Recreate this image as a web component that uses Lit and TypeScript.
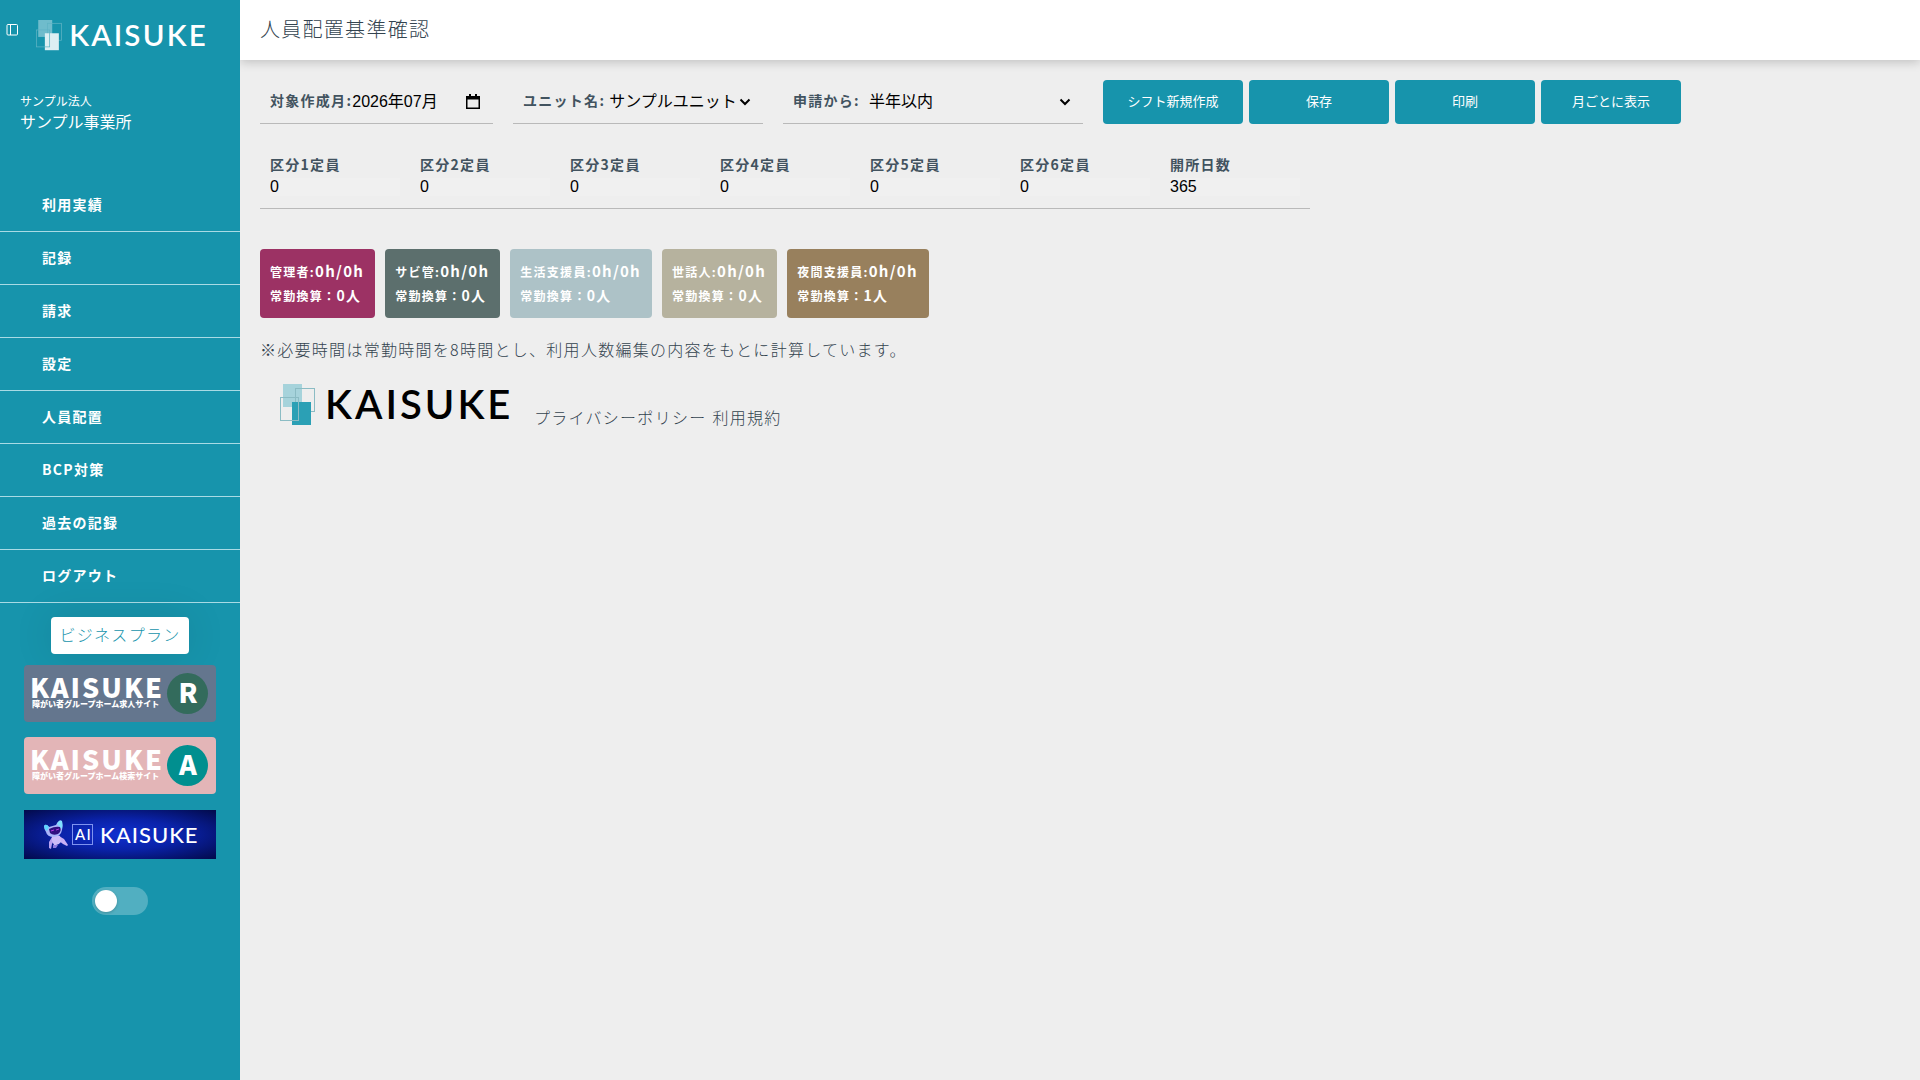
import { LitElement, html, css, svg } from "lit";
import { customElement, property } from "lit/decorators.js";

@customElement("kaisuke-logo")
export class KaisukeLogo extends LitElement {
  static styles = css`
    :host {
      display: block;
      color: #000;
      --square-a: #a6d3db;
      --square-b: #2ba0b5;
      --outline: #8bbcc4;
    }
    :host([light]) {
      color: #fff;
      --square-a: #6fbccc;
      --square-b: #dceff3;
      --outline: #5fb3c4;
    }
    svg {
      display: block;
      width: 100%;
      overflow: visible;
    }
    .word {
      font: 600 40px Lato, "Liberation Sans", sans-serif;
      letter-spacing: 3px;
      fill: currentColor;
    }
    .a {
      fill: var(--square-a);
    }
    .b {
      fill: var(--square-b);
    }
    .line {
      fill: none;
      stroke: var(--outline);
    }
  `;
  render() {
    return html`<svg viewBox="0 0 228 41" role="img" aria-label="KAISUKE">
      <rect class="a" x="3" y="0" width="19" height="23" />
      <rect class="line" x="15.5" y="4.500" width="19" height="23" />
      <rect class="b" x="12" y="18" width="19" height="23" />
      <rect class="line" x="0.500" y="13.500" width="18" height="23" />
      <text class="word" x="45" y="35">KAISUKE</text>
    </svg>`;
  }
}

@customElement("promo-banner")
export class PromoBanner extends LitElement {
  @property() caption = "";
  @property() letter = "";
  @property({ reflect: true }) tone = "slate";

  static styles = css`
    :host {
      display: block;
    }
    .banner {
      display: block;
      border-radius: 4px;
      background: #64768e;
    }
    .pink {
      background: #e3b5b7;
    }
    svg {
      display: block;
      width: 100%;
      fill: #fff;
    }
    .disc {
      fill: #336b5c;
    }
    .pink .disc {
      fill: #018f8f;
    }
    .word {
      font: 900 27px "Noto Sans CJK JP", sans-serif;
      letter-spacing: 2px;
    }
    .caption {
      font: 900 8px "Noto Sans CJK JP", sans-serif;
      letter-spacing: 0;
    }
    .letter {
      font: 900 27px "Noto Sans CJK JP", sans-serif;
      letter-spacing: 0;
      text-anchor: middle;
    }
  `;
  render() {
    return html`<a class="banner ${this.tone}" href="#">
      <svg viewBox="0 0 192 57">
        <text class="word" x="6" y="33">KAISUKE</text>
        <text class="caption" x="8" y="42">${this.caption}</text>
        <circle class="disc" cx="163.500" cy="28.500" r="20.500" />
        <text class="letter" x="164" y="38">${this.letter}</text>
      </svg>
    </a>`;
  }
}

const MENU = ["利用実績", "記録", "請求", "設定", "人員配置", "BCP対策", "過去の記録", "ログアウト"];
const ACTIONS = ["シフト新規作成", "保存", "印刷", "月ごとに表示"];
const CAPACITY = [
  ["区分1定員", "0"],
  ["区分2定員", "0"],
  ["区分3定員", "0"],
  ["区分4定員", "0"],
  ["区分5定員", "0"],
  ["区分6定員", "0"],
  ["開所日数", "365"],
];
const ROLES = [
  { name: "管理者", count: "0", tone: "plum" },
  { name: "サビ管", count: "0", tone: "moss" },
  { name: "生活支援員", count: "0", tone: "sky" },
  { name: "世話人", count: "0", tone: "sand" },
  { name: "夜間支援員", count: "1", tone: "bronze" },
];

const robot = svg`
  <path d="M28 27 L25 32 L25 38 L27 39 L28 34 L31 29 Z" fill="#b9a2f0" />
  <path d="M35 26 L40 29 L44 35 L43 36 L39 34 L35 31 Z" fill="#c9b0f5" />
  <path d="M28 26 Q32 24 36 26 L37 32 Q34 36 30 35 L28 31 Z" fill="#cdbcf8" />
  <path d="M29 35 h5 l-2 3 h-3 z" fill="#8f7be0" />
  <path d="M20 16 Q22 13 25 17 L32 15 Q35 9 38 11 Q39 16 38 20 Q37 26 30 27 Q23 27 22 22 Q20 19 20 16 Z" fill="#a9b4fa" />
  <path d="M20 16 Q22 13 25 17 L23 21 Q20 19 20 16 Z" fill="#5fd4ff" />
  <path d="M33 14 Q35 9 38 11 Q39 15 38 19 L35 16 Z" fill="#7fe0ff" />
  <path d="M25 19 Q31 16 36 17 Q38 21 34 24 Q29 26 26 23 Z" fill="#2f0f80" />
  <path d="M27 21 l3 -1 M32 20 l3 -1" stroke="#b23be0" />
`;

@customElement("app-root")
export class AppRoot extends LitElement {
  static styles = css`
    :host {
      display: grid;
      grid-template-columns: 240px minmax(0, 1fr);
      min-height: 100vh;
      background: #eee;
      color: #33434f;
      font: 300 16px/24px "Noto Sans CJK JP", sans-serif;
      letter-spacing: 0.08em;
    }
    * {
      box-sizing: border-box;
    }
    a {
      color: inherit;
      text-decoration: none;
    }
    button,
    input,
    select {
      font-family: "Liberation Sans", "Noto Sans CJK JP", sans-serif;
      color: #000;
      border: 0;
      border-radius: 0;
      margin: 0;
      padding: 0;
      background: transparent;
    }

    .side {
      background: #1794ac;
      color: #fff;
    }
    .brand {
      display: flex;
      align-items: flex-start;
      gap: 18px;
      padding: 20px 36px 0 6px;
    }
    .brand kaisuke-logo {
      flex: 1;
    }
    .collapse {
      width: 12px;
      height: 12px;
      margin-top: 4px;
    }
    .collapse svg {
      display: block;
    }
    .office {
      padding: 41px 20px 0;
      letter-spacing: 0;
      font-weight: 400;
      line-height: 20px;
    }
    .office p {
      margin: 0;
    }
    .office .corp {
      font-size: 12px;
    }
    .menu {
      margin: 48px 0 0;
      padding: 0;
      list-style: none;
      font-weight: 700;
      font-size: 14px;
      line-height: 50px;
    }
    .menu li {
      border-bottom: 1px solid #a9dbe5;
    }
    .menu a {
      display: block;
      padding: 0 0 2px 42px;
    }
    .extras {
      display: flex;
      flex-direction: column;
      align-items: center;
      padding: 14px 24px;
    }
    .plan {
      padding: 5px 9px 8px;
      border-radius: 4px;
      background: #fff;
      color: #1794ac;
      box-shadow: 0 0 40px rgba(0, 0, 0, 0.1);
    }
    .extras promo-banner {
      width: 100%;
      margin: 11px 0 4px;
    }
    .ai {
      display: block;
      width: 100%;
      margin-top: 12px;
      background: radial-gradient(ellipse at center, #1030d0 0%, #0a22a8 45%, #020a4a 100%);
    }
    .ai svg {
      display: block;
      width: 100%;
    }
    .ai .word {
      font: 500 22px Lato, sans-serif;
      letter-spacing: 1px;
      fill: #fff;
    }
    .ai .mark {
      font: 500 15px Lato, sans-serif;
      fill: #fff;
    }
    .switch {
      appearance: none;
      display: flex;
      width: 56px;
      height: 28px;
      margin-top: 28px;
      padding: 3px;
      border-radius: 14px;
      background: rgba(255, 255, 255, 0.25);
    }
    .switch::before {
      content: "";
      width: 22px;
      height: 22px;
      border-radius: 50%;
      background: #fff;
      box-shadow: 0 1px 3px rgba(0, 0, 0, 0.2);
    }
    .switch:checked {
      justify-content: flex-end;
    }

    .head {
      padding: 14px 20px 16px;
      background: #fff;
      box-shadow: 0 2px 10px rgba(0, 0, 0, 0.2);
      clip-path: inset(0 0 -20px 0);
    }
    h1 {
      margin: 0;
      font-size: 20px;
      font-weight: 300;
      line-height: 30px;
    }
    .body {
      padding: 20px;
    }
    .filters {
      display: flex;
      flex-wrap: wrap;
      gap: 20px;
    }
    .field {
      display: flex;
      align-items: center;
      height: 44px;
      padding: 0 10px;
      border-bottom: 1px solid #b9b9b9;
    }
    .field input,
    .field select {
      flex: 1;
      min-width: 0;
      height: 24px;
      font-size: 16px;
    }
    .field label,
    .field input {
      padding-bottom: 3px;
    }
    label {
      color: #42535f;
      font-size: 14px;
      font-weight: 700;
      white-space: nowrap;
    }
    .month {
      width: 233px;
    }
    .unit {
      width: 250px;
    }
    .since {
      width: 300px;
    }
    .calendar {
      width: 20px;
      height: 20px;
    }
    .calendar svg {
      display: block;
      margin: 0 auto;
    }
    select {
      appearance: none;
      background: url('data:image/svg+xml,<svg xmlns="http://www.w3.org/2000/svg" width="12" height="8"><path d="M1.500 1.500 6 6l4.500-4.500" fill="none" stroke="black" stroke-width="2"/></svg>') no-repeat right 2px center;
      padding-left: 4px;
    }
    .since select {
      padding-left: 9px;
    }
    .actions {
      display: flex;
      gap: 6px;
    }
    .actions button {
      width: 140px;
      height: 44px;
      padding-bottom: 4px;
      border-radius: 4px;
      background: #1794ac;
      color: #fff;
      font-size: 13px;
    }
    .capacity {
      display: inline-flex;
      margin-top: 28px;
      padding-bottom: 12px;
      border-bottom: 1px solid #b9b9b9;
    }
    .cell {
      display: flex;
      flex-direction: column;
      width: 150px;
      padding: 0 10px;
    }
    .cell label {
      line-height: 24px;
      padding-bottom: 2px;
    }
    .cell input {
      width: 130px;
      height: 18px;
      font-size: 16px;
      background: #f0f0f0;
    }
    .chips {
      display: flex;
      flex-wrap: wrap;
      gap: 10px;
      margin-top: 40px;
      color: #fff;
      font-size: 12px;
      font-weight: 700;
    }
    .chip {
      padding: 10px 11px 11px 10px;
      border-radius: 4px;
    }
    .chip div {
      height: 24px;
    }
    .hours {
      font-size: 15px;
    }
    .people {
      font-size: 14px;
    }
    .plum {
      background: #9c3264;
    }
    .moss {
      background: #5c6f6d;
    }
    .sky {
      background: #adc2c7;
    }
    .sand {
      background: #b6b29e;
    }
    .bronze {
      background: #98805d;
    }
    .note {
      margin: 19px 0 0;
    }
    .foot {
      display: flex;
      align-items: flex-start;
      gap: 6px;
      padding: 23px 20px 0;
    }
    .foot kaisuke-logo {
      width: 228px;
      margin-right: 20px;
    }
    .foot a {
      padding-top: 21px;
    }
  `;

  render() {
    return html`
      <aside class="side">
        <div class="brand">
          <button class="collapse" aria-label="メニュー">
            <svg width="12" height="12" viewBox="0 0 12 12" fill="none" stroke="#fff">
              <rect x="1" y="0.500" width="10.500" height="10.500" rx="1" />
              <path d="M4.500 0.500v10.500" />
            </svg>
          </button>
          <kaisuke-logo light></kaisuke-logo>
        </div>
        <div class="office">
          <p class="corp">サンプル法人</p>
          <p>サンプル事業所</p>
        </div>
        <nav>
          <ul class="menu">
            ${MENU.map((item) => html`<li><a href="#">${item}</a></li>`)}
          </ul>
        </nav>
        <div class="extras">
          <a class="plan" href="#">ビジネスプラン</a>
          <promo-banner caption="障がい者グループホーム求人サイト" letter="R"></promo-banner>
          <promo-banner tone="pink" caption="障がい者グループホーム検索サイト" letter="A"></promo-banner>
          <a class="ai" href="#">
            <svg viewBox="0 0 192 49">
              ${robot}
              <rect x="48.500" y="14.500" width="20" height="20" fill="none" stroke="#7f93f0" />
              <text class="mark" x="51" y="30">AI</text>
              <text class="word" x="76" y="33">KAISUKE</text>
            </svg>
          </a>
          <input class="switch" type="checkbox" role="switch" aria-label="表示切替" />
        </div>
      </aside>
      <main>
        <header class="head"><h1>人員配置基準確認</h1></header>
        <div class="body">
          <div class="filters">
            <div class="field month">
              <label for="month">対象作成月:</label>
              <input id="month" type="text" value="2026年07月" />
              <button class="calendar" aria-label="カレンダー">
                <svg width="14" height="15" viewBox="0 0 14 15">
                  <path d="M3 0h2v2h4V0h2v2h3v13H0V2h3z M1.500 5.500v8h11v-8z" fill="#000" fill-rule="evenodd" />
                </svg>
              </button>
            </div>
            <div class="field unit">
              <label for="unit">ユニット名:</label>
              <select id="unit"><option>サンプルユニット</option></select>
            </div>
            <div class="field since">
              <label for="since">申請から:</label>
              <select id="since"><option>半年以内</option></select>
            </div>
            <div class="actions">${ACTIONS.map((text) => html`<button>${text}</button>`)}</div>
          </div>
          <div class="capacity">
            ${CAPACITY.map(
              ([name, value], i) => html`<div class="cell">
                <label for="cap${i}">${name}</label>
                <input id="cap${i}" type="text" inputmode="numeric" .value=${value} />
              </div>`
            )}
          </div>
          <div class="chips">
            ${ROLES.map(
              (role) => html`<div class="chip ${role.tone}">
                <div>${role.name}:<span class="hours">0h/0h</span></div>
                <div>常勤換算：<span class="people">${role.count}人</span></div>
              </div>`
            )}
          </div>
          <p class="note">※必要時間は常勤時間を8時間とし、利用人数編集の内容をもとに計算しています。</p>
          <footer class="foot">
            <kaisuke-logo></kaisuke-logo>
            <a href="#">プライバシーポリシー</a>
            <a href="#">利用規約</a>
          </footer>
        </div>
      </main>
    `;
  }
}
